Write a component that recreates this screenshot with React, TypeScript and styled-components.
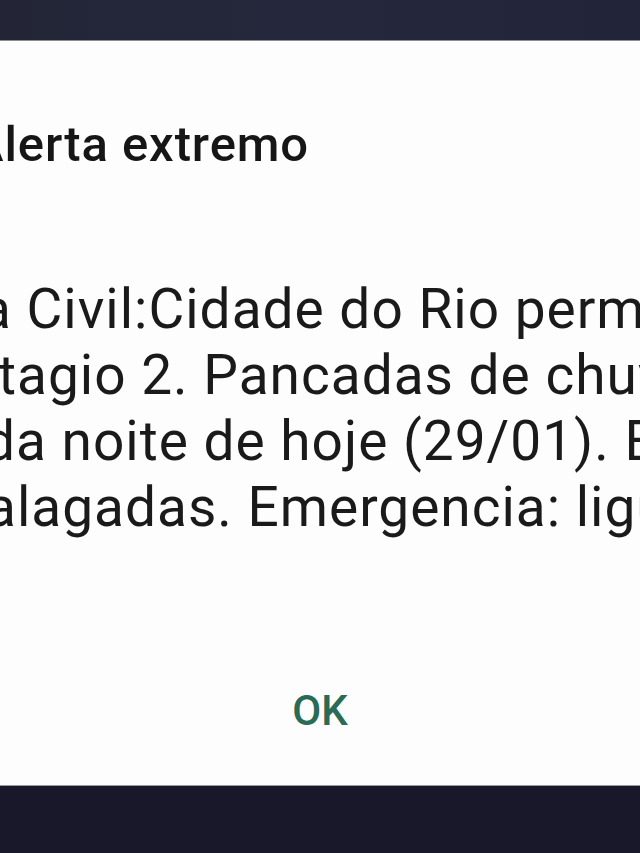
import { FC } from "react";
import styled, { createGlobalStyle } from "styled-components";

const GlobalStyle = createGlobalStyle`
  html, body {
    margin: 0;
    padding: 0;
    background: #1c1c2e;
    overflow: hidden;
  }
  #root {
    height: 853px;
  }
`;

const lines = [
  { id: 1, text: "a Civil:Cidade do Rio permanece", shift: -19 },
  { id: 2, text: "tagio 2. Pancadas de chuva", shift: -2 },
  { id: 3, text: "da noite de hoje (29/01). Evite", shift: -16 },
  { id: 4, text: "alagadas. Emergencia: ligue 199", shift: -14 },
];

const App: FC = () => {
  return (
    <>
      <GlobalStyle />
      <Screen>
        <TopBar />
        <Dialog>
          <Title>Alerta extremo</Title>
          <Body>
            {lines.map(({ id, text, shift }) => (
              <Line key={id} $shift={shift}>
                {text}
              </Line>
            ))}
          </Body>
          <Actions>
            <OkButton type="button">OK</OkButton>
          </Actions>
        </Dialog>
        <BottomBar />
      </Screen>
    </>
  );
};

const Screen = styled.div`
  display: flex;
  flex-direction: column;
  width: 640px;
  height: 853px;
  overflow: hidden;
  font-family: Roboto, "Noto Sans", sans-serif;
`;

const TopBar = styled.div`
  height: 40px;
  background: linear-gradient(90deg, #232537 0%, #25283c 50%, #22243a 100%);
  border-bottom: 1px solid #8a8d96;
`;

const Dialog = styled.section`
  flex: 1;
  display: flex;
  flex-direction: column;
  background: #fdfdfd;
  overflow: hidden;
`;

const Title = styled.h2`
  margin: 79px 0 0 -29px;
  font-size: 49px;
  font-weight: 500;
  letter-spacing: 0.9px;
  line-height: 1;
  color: #161616;
  white-space: nowrap;
`;

const Body = styled.div`
  display: flex;
  flex-direction: column;
  margin-top: 107px;
`;

const Line = styled.p<{ $shift: number }>`
  margin: 0 0 0 ${(p) => p.$shift}px;
  font-size: 55px;
  letter-spacing: 1px;
  line-height: 66px;
  color: #1a1a1a;
  white-space: nowrap;
`;

const Actions = styled.div`
  display: flex;
  justify-content: center;
  margin-top: 150px;
`;

const OkButton = styled.button`
  border: none;
  background: none;
  padding: 0;
  font-family: Roboto, "Noto Sans", sans-serif;
  font-size: 42px;
  font-weight: 500;
  color: #2a6b55;
  line-height: 1;
`;

const BottomBar = styled.div`
  height: 67px;
  background: #19182a;
  border-top: 1px solid #9a9aa0;
`;

export default App;
